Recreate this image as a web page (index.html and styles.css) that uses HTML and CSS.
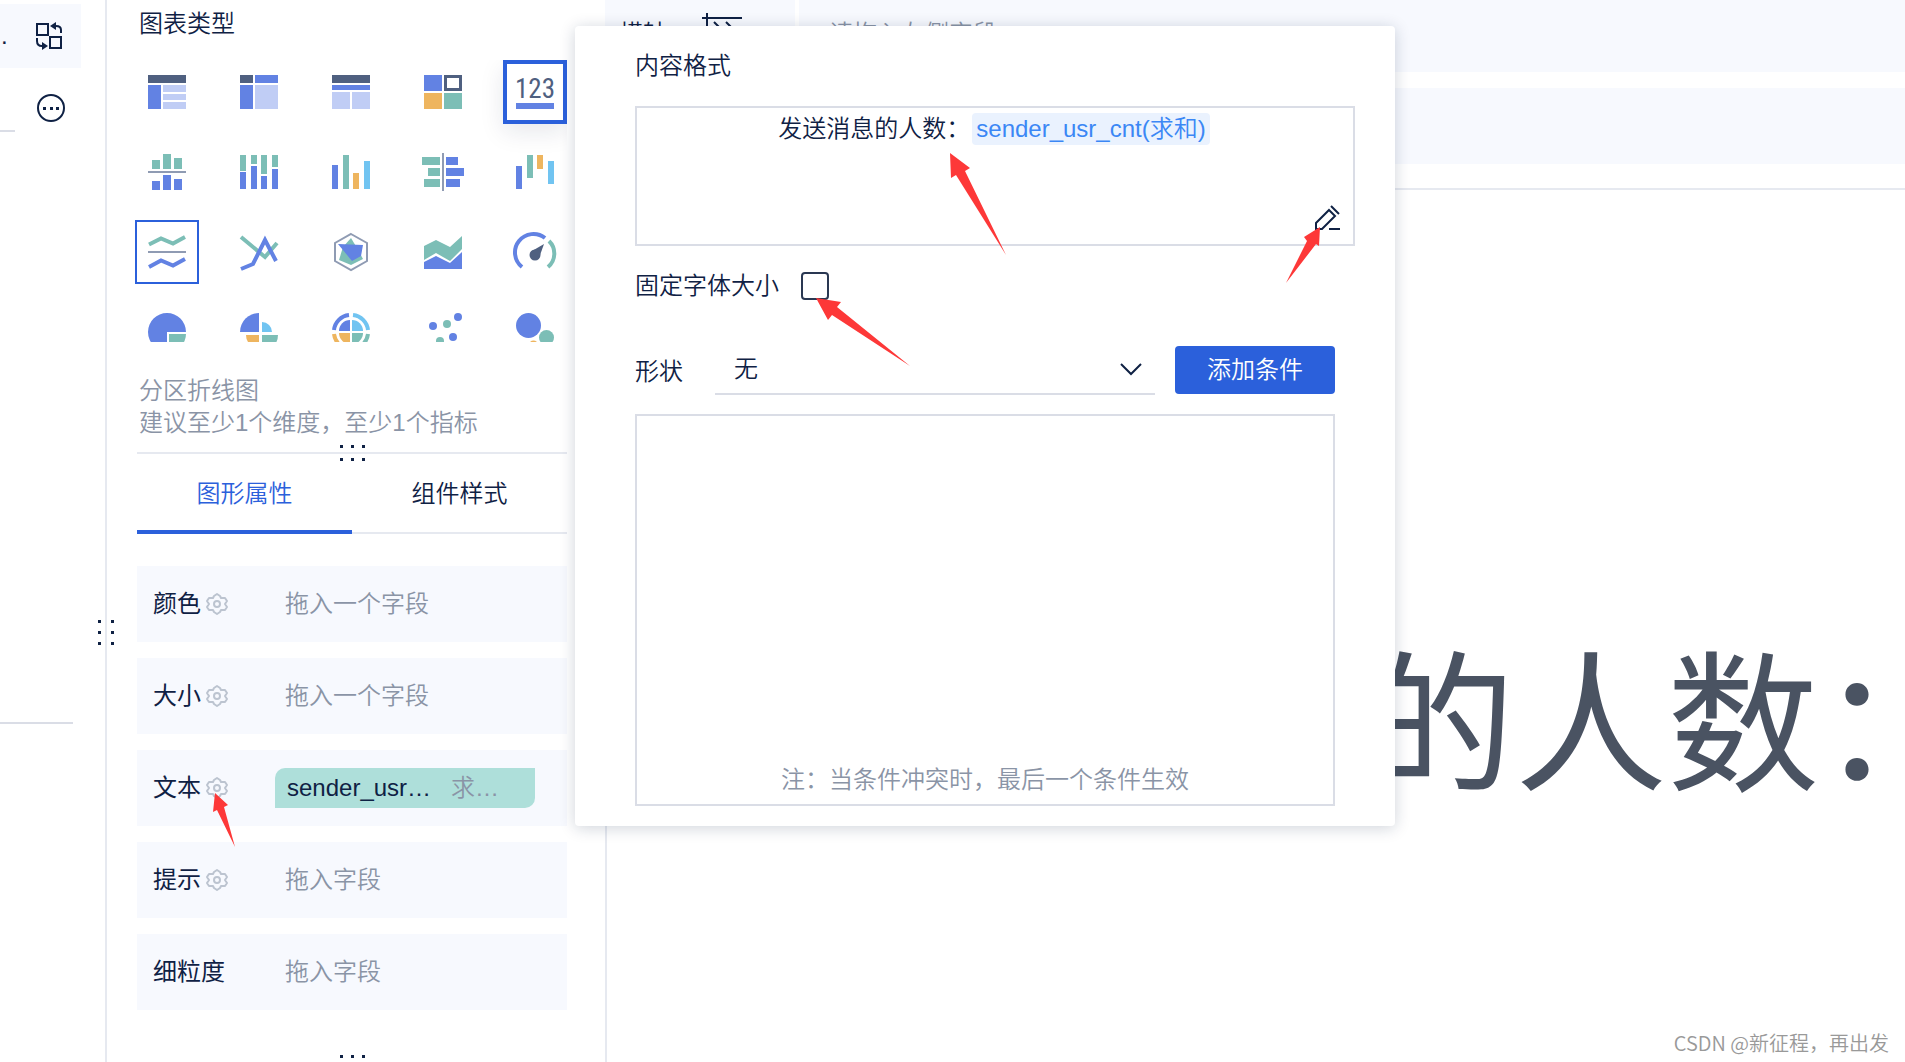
FILE: index.html
```html
<!DOCTYPE html>
<html lang="zh-CN">
<head>
<meta charset="utf-8">
<meta name="viewport" content="width=device-width, initial-scale=1">
<title>图表类型</title>
<link rel="stylesheet" href="styles.css">
</head>
<body>
<div class="app">
  <aside class="rail">
    <div class="rail-item">
      <span class="rail-dot">.</span>
      <button class="icon-button" type="button" aria-label="切换">
        <svg width="28" height="30" viewBox="0 0 28 30" fill="none" stroke="#0f2144" stroke-width="2">
          <rect x="2" y="3" width="11" height="11"/><rect x="15" y="16" width="11" height="11"/>
          <path d="M26 12V9Q26 5 21 5H19M2 17v3q0 5 5 5h2"/>
          <path d="M15 5l6-4v8zM13 25l-6-4v8z" fill="#0f2144" stroke="none"/>
        </svg>
      </button>
    </div>
    <div class="rail-more">
      <button class="icon-button" type="button" aria-label="更多">
        <svg width="30" height="30" viewBox="0 0 30 30"><circle cx="15" cy="15" r="13" fill="none" stroke="#0f2144" stroke-width="2"/><path d="M7 14h3v3H7zM14 14h3v3h-3zM20 14h3v3h-3z" fill="#0f2144"/></svg>
      </button>
    </div>
    <div class="rail-group"></div>
    <span class="grip grip-side" aria-hidden="true"><i></i><i></i><i></i><i></i><i></i><i></i></span>
  </aside>

  <section class="panel">
    <h2 class="panel-title">图表类型</h2>
    <div class="chart-types">
      <button class="type" type="button" aria-label="分组表"><svg viewBox="0 0 38 38"><path class="dark" d="M0 2h38v8H0z"/><path class="blue" d="M0 12h13v24H0z"/><path class="pale" d="M15 12h23v7H15zM15 21h23v6H15zM15 29h23v7H15z"/></svg></button>
      <button class="type" type="button" aria-label="交叉表"><svg viewBox="0 0 38 38"><path class="dark" d="M0 2h13v8H0z"/><path class="blue" d="M15 2h23v8H15zM0 12h13v24H0z"/><path class="pale" d="M15 12h23v24H15z"/></svg></button>
      <button class="type" type="button" aria-label="明细表"><svg viewBox="0 0 38 38"><path class="dark" d="M0 2h38v8H0z"/><path class="blue" d="M0 12h38v5H0z"/><path class="pale" d="M0 19h18v17H0zM20 19h18v17H20z"/></svg></button>
      <button class="type" type="button" aria-label="颜色表格"><svg viewBox="0 0 38 38"><path class="blue" d="M0 2h18v16H0z"/><path d="M21.500 3.500h15v13h-15z" fill="none" stroke="#4f6080" stroke-width="3"/><path class="orange" d="M0 20h18v16H0z"/><path class="green" d="M20 20h18v16H20z"/></svg></button>
      <button class="type type-current" type="button" aria-label="KPI指标卡"><svg viewBox="0 0 38 38"><text class="digits" x="19" y="25" text-anchor="middle">123</text><path class="blue" d="M0 30h38v6H0z"/></svg></button>

      <button class="type" type="button" aria-label="分区柱形图"><svg viewBox="0 0 38 38"><path class="green" d="M4 7h8v9H4zM15 1h8v15h-8zM26 5h8v11h-8z"/><path class="gray" d="M0 18h38v2H0z"/><path class="blue" d="M4 28h8v9H4zM15 22h8v15h-8zM26 26h8v11h-8z"/></svg></button>
      <button class="type" type="button" aria-label="堆积柱形图"><svg viewBox="0 0 38 38"><path class="green" d="M0 2h6v16H0zM11 2h6v9h-6zM21 2h6v19h-6zM32 2h6v12h-6z"/><path class="blue" d="M0 19h6v17H0zM11 13h6v23h-6zM21 23h6v13h-6zM32 16h6v20h-6z"/></svg></button>
      <button class="type" type="button" aria-label="多系列柱形图"><svg viewBox="0 0 38 38"><path class="blue" d="M0 12h6v24H0z"/><path class="green" d="M11 2h6v34h-6z"/><path class="orange" d="M21 20h6v16h-6z"/><path class="sky" d="M32 8h6v28h-6z"/></svg></button>
      <button class="type" type="button" aria-label="对比柱状图"><svg viewBox="0 0 38 38"><path class="green" d="M-2 4h18v8H-2zM4 15h12v8H4zM0 26h16v8H0z"/><path class="gray" d="M18 0h2v38h-2z"/><path class="blue" d="M22 4h12v8H22zM22 15h18v8H22zM22 26h14v8H22z"/></svg></button>
      <button class="type" type="button" aria-label="瀑布图"><svg viewBox="0 0 38 38"><path class="blue" d="M0 13h6v23H0z"/><path class="green" d="M11 2h6v23h-6z"/><path class="orange" d="M21 2h6v14h-6z"/><path class="sky" d="M32 8h6v23h-6z"/></svg></button>

      <button class="type type-picked" type="button" aria-label="分区折线图"><svg viewBox="0 0 38 38"><path class="line-green" d="M1 11.500 13 5.500 25 10.500 37 4"/><path class="gray" d="M0 18h38v2H0z"/><path class="line-blue" d="M1 34 13 27.500 25 32.500 37 26"/></svg></button>
      <button class="type" type="button" aria-label="多系列折线图"><svg viewBox="0 0 38 38"><path class="line-green" d="M1 4 25 24 37 10"/><path class="line-blue" d="M1 36 13 31 25 7 36 28"/></svg></button>
      <button class="type" type="button" aria-label="雷达图"><svg viewBox="0 0 38 38"><path d="M19 1 35 10v18l-16 9L3 28V10z" fill="none" stroke="#8f9bb3" stroke-width="2"/><path class="green" d="M19 5 25 15 31 26 19 32 7 27 11 14z"/><path class="blue" d="M6 11 31 12 29 23 20 28z"/></svg></button>
      <button class="type" type="button" aria-label="范围面积图"><svg viewBox="0 0 38 38"><path class="green" d="M0 13 12 7 26 14 38 3V16L26 28 12 20 0 27z"/><path class="blue" d="M0 29 12 23 26 30 38 19V36H0z"/></svg></button>
      <button class="type" type="button" aria-label="仪表盘"><svg viewBox="0 0 38 38"><path class="line-blue" d="M6 34A17.500 17.500 0 0 1 29 5"/><path class="line-green" d="M33 8A17.500 17.500 0 0 1 32 34"/><circle class="dark" cx="19" cy="22" r="5.500"/><path class="dark" d="M28 11 23 25 16 18z"/></svg></button>

      <button class="type" type="button" aria-label="饼图"><svg viewBox="0 0 38 38"><path class="blue" d="M38 19A19 19 0 1 0 19 38V19z"/><path class="green" d="M21 21h17A17 17 0 0 1 21 38z"/></svg></button>
      <button class="type" type="button" aria-label="玫瑰图"><svg viewBox="0 0 38 38"><path class="blue" d="M19 0v19H0A19 19 0 0 1 19 0z"/><path class="sky" d="M22 9v10h10A10 10 0 0 0 22 9z"/><path class="orange" d="M6 22h13v13A13 13 0 0 1 6 22z"/><path class="green" d="M22 22h16A16 16 0 0 1 22 38z"/></svg></button>
      <button class="type" type="button" aria-label="多层饼图"><svg viewBox="0 0 38 38"><g fill="none" stroke-width="4"><path stroke="#6282e3" d="M17 2A17 17 0 0 0 2 17"/><path stroke="#71c4f1" d="M21 2A17 17 0 0 1 36 17"/><path stroke="#eeb55f" d="M2 21A17 17 0 0 0 17 36"/><path stroke="#7cbeb6" d="M36 21A17 17 0 0 1 21 36"/></g><path class="blue" d="M18 7v11H7A11 11 0 0 1 18 7z"/><path class="sky" d="M20 7v11h11A11 11 0 0 0 20 7z"/><path class="orange" d="M7 20h11v11A11 11 0 0 1 7 20z"/><path class="green" d="M31 20H20v11A11 11 0 0 0 31 20z"/></svg></button>
      <button class="type" type="button" aria-label="散点图"><svg viewBox="0 0 38 38"><g class="blue"><circle cx="34" cy="4" r="4"/><circle cx="9" cy="13" r="4"/><circle cx="29" cy="24" r="4"/></g><g class="green"><circle cx="23" cy="11" r="4"/><circle cx="16" cy="28" r="4"/></g></svg></button>
      <button class="type" type="button" aria-label="聚合气泡图"><svg viewBox="0 0 38 38"><circle class="blue" cx="12.500" cy="12.500" r="12.500"/><circle class="green" cx="30.500" cy="24.500" r="7.500"/><circle class="orange" cx="17.500" cy="32" r="4.500"/></svg></button>
    </div>
    <p class="type-note">分区折线图<br>建议至少1个维度，至少1个指标</p>
    <div class="splitter"><span class="grip" aria-hidden="true"><i></i><i></i><i></i><i></i><i></i><i></i></span></div>
    <div class="tabs" role="tablist">
      <button class="tab tab-on" type="button" role="tab" aria-selected="true">图形属性</button>
      <button class="tab" type="button" role="tab" aria-selected="false">组件样式</button>
    </div>
    <div class="slots">
      <div class="slot"><span class="slot-name">颜色<button class="gear" type="button" aria-label="颜色设置"><svg viewBox="0 0 22 22"><use href="#gear"/></svg></button></span><span class="hint">拖入一个字段</span></div>
      <div class="slot"><span class="slot-name">大小<button class="gear" type="button" aria-label="大小设置"><svg viewBox="0 0 22 22"><use href="#gear"/></svg></button></span><span class="hint">拖入一个字段</span></div>
      <div class="slot"><span class="slot-name">文本<button class="gear" type="button" aria-label="文本设置"><svg viewBox="0 0 22 22"><use href="#gear"/></svg></button></span><span class="chip"><span class="chip-name">sender_usr…</span><span class="chip-calc">求…</span></span></div>
      <div class="slot"><span class="slot-name">提示<button class="gear" type="button" aria-label="提示设置"><svg viewBox="0 0 22 22"><use href="#gear"/></svg></button></span><span class="hint">拖入字段</span></div>
      <div class="slot"><span class="slot-name">细粒度</span><span class="hint">拖入字段</span></div>
    </div>
    <div class="panel-end"><span class="grip" aria-hidden="true"><i></i><i></i><i></i><i></i><i></i><i></i></span></div>

    <div class="popup" role="dialog" aria-labelledby="format-title">
      <h3 class="popup-title" id="format-title">内容格式</h3>
      <div class="editor">
        <p class="editor-line">发送消息的人数：<span class="token">sender_usr_cnt(求和)</span></p>
        <button class="icon-button edit" type="button" aria-label="编辑">
          <svg width="28" height="28" viewBox="0 0 28 28" fill="none" stroke="#0f2144" stroke-width="2"><path d="M16 5l6 6L9 24H3v-6zM18 1l8 8M16 24h11"/></svg>
        </button>
      </div>
      <div class="check-row">
        <label for="fixed-size">固定字体大小</label>
        <input class="check" id="fixed-size" type="checkbox">
      </div>
      <div class="shape-row">
        <label class="shape-label" for="shape">形状</label>
        <span class="select-wrap">
          <select class="select" id="shape"><option>无</option></select>
          <svg class="chevron" width="24" height="14" viewBox="0 0 24 14" fill="none" stroke="#0f2144" stroke-width="2"><path d="M2 1l10 10L22 1"/></svg>
        </span>
        <button class="primary" type="button">添加条件</button>
      </div>
      <div class="conditions"><p class="conditions-note">注：当条件冲突时，最后一个条件生效</p></div>
    </div>
  </section>

  <main class="main">
    <div class="axis">
      <div class="axis-name">横轴
        <svg width="44" height="44" viewBox="0 0 44 44" fill="none" stroke="#0f2144" stroke-width="2"><path d="M7 1v40M2 6h40M14 10l7 7M26 10l7 7"/></svg>
      </div>
      <div class="axis-drop">请拖入左侧字段</div>
    </div>
    <div class="axis axis-second"><div class="axis-name">纵轴</div><div class="axis-drop"></div></div>
    <div class="canvas"><p class="kpi">发送消息的人数：</p></div>
  </main>

  <svg class="arrow arrow-text" width="56" height="104" viewBox="0 0 56 104"><path d="M0 0 20 15 15 18 56 102 6 22 1 25z"/></svg>
  <svg class="arrow arrow-edit" width="36" height="58" viewBox="0 0 36 58"><path d="M34 0 33 19 30 17 0 56 21 14 18 10z"/></svg>
  <svg class="arrow arrow-check" width="96" height="70" viewBox="0 0 96 70"><path d="M0 0 25 4 21 9 94 68 16 17 12 22z"/></svg>
  <svg class="arrow arrow-gear" width="24" height="56" viewBox="0 0 24 56"><path d="M2 0 15 12 11 14 22 54 4 17 0 19z"/></svg>
  <p class="watermark">CSDN @新征程，再出发</p>
</div>

<svg class="defs" aria-hidden="true"><defs><g id="gear" fill="none" stroke="#bcc4d0" stroke-width="2" stroke-linejoin="round"><path d="M11 1 14 3 15 5 19 5 21 8 19 11 21 14 19 17 15 17 14 19 11 21 8 19 7 17 3 17 1 14 3 11 1 8 3 5 7 5 8 3z"/><circle cx="11" cy="11" r="3"/></g></defs></svg>
</body>
</html>
```
FILE: styles.css
```css
* { box-sizing: border-box; }

:root {
  --ink: #0f2144;
  --muted: #8a94a6;
  --line: #e6e9f0;
  --frame: #dadde6;
  --wash: #f7f9fe;
  --accent: #2b60db;
}

body {
  margin: 0;
  color: var(--ink);
  background: #fff;
  font: 350 24px/32px "Liberation Sans", "Noto Sans CJK SC", sans-serif;
}

h2, h3, p { margin: 0; font-size: 24px; font-weight: 350; }

button {
  padding: 0;
  border: 0;
  background: none;
  color: inherit;
  font: inherit;
}

svg { display: block; overflow: visible; }
.defs { position: absolute; width: 0; height: 0; }

.app {
  position: relative;
  display: flex;
  height: 100vh;
  overflow: hidden;
}

/* Left rail */
.rail {
  position: relative;
  flex: none;
  width: 107px;
  padding-top: 4px;
  border-right: 2px solid var(--line);
}
.rail-item {
  display: flex;
  align-items: center;
  width: 81px;
  height: 64px;
  background: var(--wash);
}
.rail-dot { width: 35px; padding-left: 1px; }
.rail-more {
  display: flex;
  align-items: flex-start;
  justify-content: flex-end;
  width: 66px;
  height: 62px;
  padding-top: 25px;
}
.rail-group {
  width: 73px;
  height: 594px;
  border-bottom: 2px solid var(--frame);
  background: linear-gradient(var(--frame), var(--frame)) 0 0 / 15px 2px no-repeat;
}

.grip {
  display: grid;
  grid-template-columns: repeat(3, 3px);
  gap: 10px 8px;
}
.grip i { height: 3px; background: var(--ink); }
.grip-side {
  position: absolute;
  top: 620px;
  right: -9px;
  grid-template-columns: repeat(2, 3px);
  gap: 8px 10px;
}

/* Chart panel */
.panel {
  position: relative;
  flex: none;
  display: flex;
  flex-direction: column;
  width: 498px;
  padding: 8px 38px 0 30px;
}
.panel > * { flex-shrink: 0; }
.panel-title { padding-left: 2px; }
.chart-types {
  display: grid;
  grid-template-columns: repeat(5, 64px);
  grid-auto-rows: 64px;
  gap: 16px 28px;
  height: 282px;
  margin: 20px 0 0 -2px;
  overflow: hidden;
}
.type {
  display: flex;
  align-items: center;
  justify-content: center;
}
.type svg { flex: none; width: 38px; height: 38px; }
.type-current {
  border: 4px solid var(--accent);
  box-shadow: 0 8px 24px rgba(15, 33, 68, 0.1);
}
.type-picked { border: 2px solid var(--accent); }
.digits { fill: #4f6080; font: 400 27px "Roboto Condensed", "Roboto", sans-serif; }
.dark { fill: #4f6080; }
.blue { fill: #6282e3; }
.pale { fill: #c0cdf5; }
.green { fill: #7cbeb6; }
.orange { fill: #eeb55f; }
.sky { fill: #71c4f1; }
.gray { fill: #8f9bb3; }
.line-green, .line-blue { fill: none; stroke-width: 4px; }
.line-green { stroke: #7cbeb6; }
.line-blue { stroke: #6282e3; }

.type-note {
  padding: 33px 0 13px 2px;
  color: var(--muted);
}
.splitter {
  display: flex;
  align-items: center;
  justify-content: center;
  height: 2px;
  background: var(--line);
}
.tabs {
  display: flex;
  height: 80px;
  border-bottom: 2px solid var(--line);
}
.tab { flex: 1; height: 80px; }
.tab-on {
  color: var(--accent);
  border-bottom: 4px solid var(--accent);
  padding-top: 4px;
}
.slots {
  display: grid;
  gap: 16px;
  padding-top: 32px;
}
.slot {
  display: flex;
  align-items: center;
  height: 76px;
  padding: 0 32px 0 16px;
  background: var(--wash);
}
.slot-name {
  display: flex;
  align-items: center;
  flex: none;
  gap: 5px;
  width: 122px;
  font-weight: 400;
}
.gear svg { width: 22px; height: 22px; }
.hint { padding-left: 10px; color: var(--muted); }
.chip {
  flex: 1;
  display: flex;
  justify-content: space-between;
  height: 40px;
  padding: 0 36px 0 12px;
  border-radius: 10px 0;
  background: #aedfda;
  line-height: 40px;
}
.chip-calc { color: var(--muted); }
.panel-end {
  display: flex;
  justify-content: center;
  padding-top: 45px;
}

/* Content format popup */
.popup {
  position: absolute;
  z-index: 2;
  top: 26px;
  left: 468px;
  width: 820px;
  padding: 24px 60px 20px;
  border-radius: 4px;
  background: #fff;
  box-shadow: 0 2px 16px rgba(15, 33, 68, 0.2);
}
.editor {
  position: relative;
  height: 140px;
  margin: 24px -20px 0 0;
  border: 2px solid var(--frame);
}
.editor-line { padding: 5px 2px 0 0; text-align: center; }
.token {
  display: inline-block;
  margin-left: 2px;
  padding: 0 4px;
  border-radius: 4px;
  color: #3b87f5;
  background: #eaf2fe;
}
.edit { position: absolute; right: 12px; bottom: 11px; }
.check-row {
  display: flex;
  align-items: center;
  gap: 22px;
  height: 80px;
}
.check {
  appearance: none;
  width: 28px;
  height: 28px;
  margin: 0;
  border: 2px solid #2a3852;
  border-radius: 4px;
}
.shape-row {
  display: flex;
  align-items: center;
  height: 48px;
  margin-top: 20px;
}
.shape-label { width: 80px; padding-top: 4px; }
.select-wrap {
  position: relative;
  flex: 1;
  height: 50px;
  margin: 0 20px 0 0;
  border-bottom: 2px solid var(--frame);
}
.select {
  appearance: none;
  width: 100%;
  height: 48px;
  padding: 0 19px;
  border: 0;
  background: none;
  color: inherit;
  font: inherit;
}
.chevron { position: absolute; top: 18px; right: 12px; }
.primary {
  width: 160px;
  height: 48px;
  border-radius: 4px;
  background: var(--accent);
  color: #fff;
}
.conditions {
  display: flex;
  align-items: flex-end;
  justify-content: center;
  height: 392px;
  margin-top: 20px;
  padding-bottom: 8px;
  border: 2px solid var(--frame);
  color: var(--muted);
}

/* Canvas */
.main {
  flex: 1;
  display: flex;
  flex-direction: column;
  min-width: 0;
}
.axis {
  display: flex;
  gap: 4px;
  height: 76px;
  margin-top: -4px;
}
.axis-second { margin-top: 16px; }
.axis-name, .axis-drop {
  display: flex;
  align-items: center;
  background: var(--wash);
}
.axis-name {
  gap: 33px;
  width: 190px;
  padding-left: 14px;
}
.axis-drop { flex: 1; padding-left: 30px; color: var(--muted); }
.canvas {
  flex: 1;
  display: flex;
  align-items: center;
  margin-top: 24px;
  padding: 202px 0 0 148px;
  border: solid var(--line);
  border-width: 2px 0 0 2px;
  overflow: hidden;
}
.kpi {
  color: #4a5362;
  font-size: 152px;
  font-weight: 400;
  line-height: 200px;
  white-space: nowrap;
}

/* Red pointers drawn over the page */
.arrow { position: absolute; z-index: 3; fill: #fd3838; }
.arrow-text { top: 153px; left: 950px; }
.arrow-edit { top: 227px; left: 1286px; }
.arrow-check { top: 298px; left: 816px; }
.arrow-gear { top: 793px; left: 213px; }

.watermark {
  position: absolute;
  right: 16px;
  bottom: 3px;
  color: #999;
  font-family: "Liberation Sans", "Noto Sans CJK TC", sans-serif;
  font-family: "Noto Sans CJK TC", sans-serif;
  font-size: 20px;
}
```
